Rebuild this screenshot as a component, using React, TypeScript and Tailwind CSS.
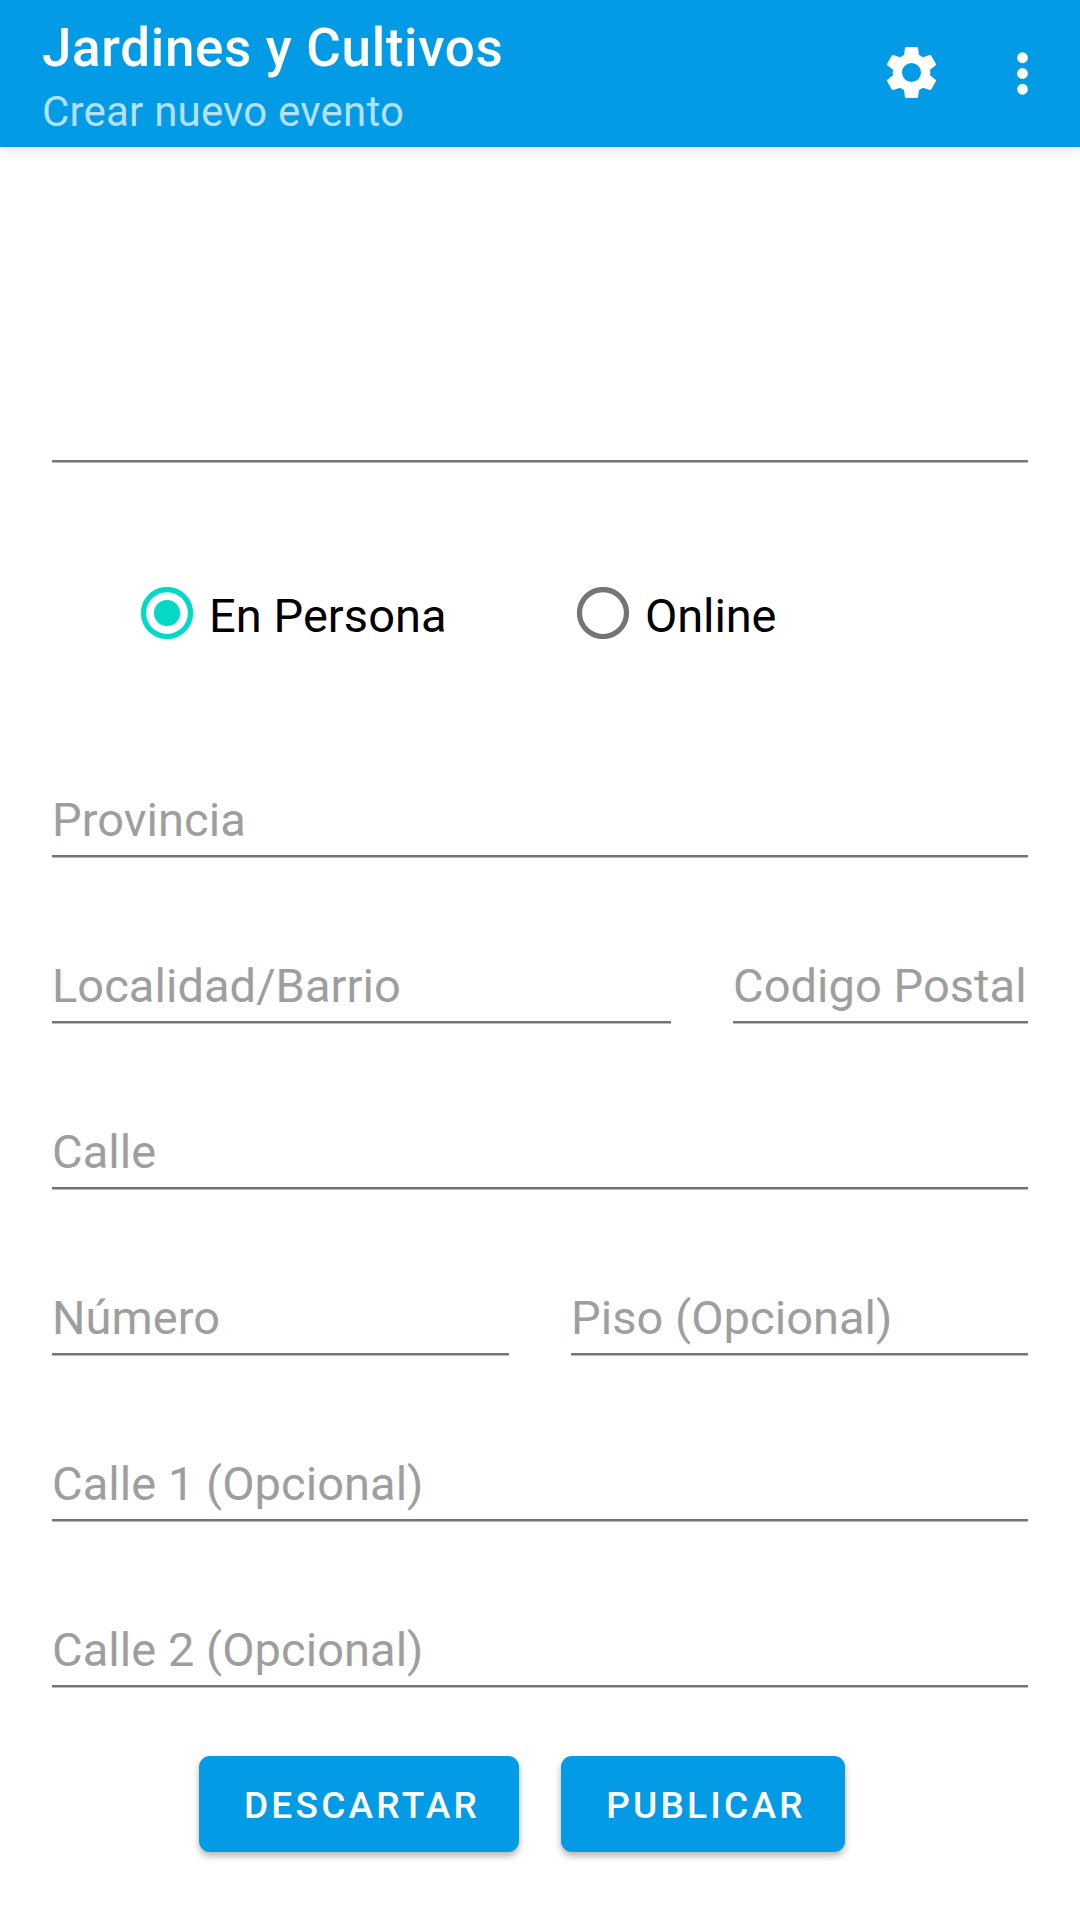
function Field({ label = '', className = '' }: { label?: string; className?: string }) {
  return (
    <div className={`flex h-[72px] flex-col justify-between whitespace-nowrap pt-[6px] text-[47px] leading-[56px] tracking-[0.05px] text-[#9e9e9e] ${className}`}>
      <span>{label}</span>
      <div className="h-[3px] border-b border-[#bababa] bg-[#757575]" />
    </div>
  );
}

export default function App() {
  return (
    <div className="flex h-[1920px] w-[1080px] flex-col overflow-hidden bg-white font-['Roboto',sans-serif]">
      <header className="flex h-[147px] shrink-0 items-start bg-[#039be5] pl-[42px] shadow-[0_3px_12px_rgba(0,0,0,0.12)]">
        <div className="pt-[17px]">
          <h1 className="text-[53px] font-medium leading-[62px] tracking-[0.65px] text-white">Jardines y Cultivos</h1>
          <p className="pt-[8px] text-[42px] leading-[49px] tracking-[0.2px] text-[#b3e1f7]">Crear nuevo evento</p>
        </div>
        <svg className="ml-auto mr-[48px] mt-[41px] size-[63px]" viewBox="120 63 189 189" fill="white">
          <path
            fillRule="evenodd"
            d="M198 81H231Q233 81 234 83L237 105L249 112L269 105Q272 104 273 106L288 132Q289 134 287 136L270 149Q272 157.500 270 166L287 179Q289 181 288 183L273 209Q272 211 269 210L249 203L237 210L234 232Q233 234 231 234H198Q196 234 195 232L192 210L180 203L160 210Q157 211 156 209L141 183Q140 181 142 179L159 166Q157 157.500 159 149L142 136Q140 134 141 132L156 106Q157 104 160 105L180 112L192 105L195 83Q196 81 198 81ZM214.500 129A28.500 28.500 0 1 0 214.500 186A28.500 28.500 0 1 0 214.500 129Z"
          />
        </svg>
        <svg className="mr-[26px] mt-[42px] size-[63px]" viewBox="0 0 24 24" fill="white"><circle cx="12" cy="6" r="2.050" /><circle cx="12" cy="12" r="2.050" /><circle cx="12" cy="18" r="2.050" /></svg>
      </header>
      <main className="flex flex-col px-[52px] pt-[244px]">
        <Field />
        <div className="mt-[113px] flex h-[80px] items-center pl-[89px] text-[47px] text-black">
          <svg className="mb-[6px] size-[52px]" viewBox="0 0 52 52"><circle cx="26" cy="26" r="23.500" fill="none" stroke="#03dac5" strokeWidth="5.250" /><circle cx="26" cy="26" r="13.100" fill="#03dac5" /></svg>
          <span className="ml-[16px] w-[368px] tracking-[0.05px]">En Persona</span>
          <svg className="mb-[6px] size-[52px]" viewBox="0 0 52 52"><circle cx="26" cy="26" r="23.500" fill="none" stroke="#757575" strokeWidth="5.250" /></svg>
          <span className="ml-[16px] tracking-[-0.1px]">Online</span>
        </div>
        <div className="mt-[130px] flex flex-col gap-[94px]">
          <Field label="Provincia" />
          <div className="flex gap-[62px]"><Field label="Localidad/Barrio" className="w-[619px]" /><Field label="Codigo Postal" className="w-[295px]" /></div>
          <Field label="Calle" />
          <div className="flex gap-[62px]"><Field label="Número" className="w-[457px]" /><Field label="Piso (Opcional)" className="w-[457px]" /></div>
          <Field label="Calle 1 (Opcional)" />
          <Field label="Calle 2 (Opcional)" />
        </div>
        <div className="mt-[68px] flex gap-[42px] pl-[147px] text-[37px] font-medium text-white">
          <button className="h-[96px] w-[320px] rounded-[11px] bg-[#039be5] pl-[6px] pt-[3px] tracking-[3.25px] shadow-[0_4px_7px_rgba(0,0,0,0.3)]">DESCARTAR</button>
          <button className="h-[96px] w-[284px] rounded-[11px] bg-[#039be5] pl-[6px] pt-[3px] tracking-[3.25px] shadow-[0_4px_7px_rgba(0,0,0,0.3)]">PUBLICAR</button>
        </div>
      </main>
    </div>
  );
}
